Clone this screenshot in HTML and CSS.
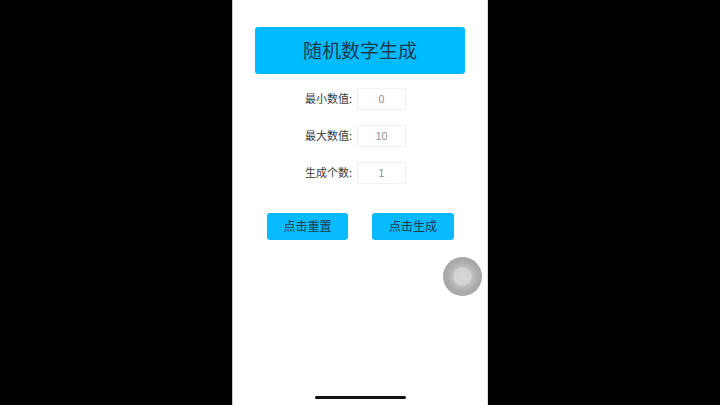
FILE: index.html
```html
<!DOCTYPE html>
<html lang="zh">
<head>
<meta charset="utf-8">
<title>随机数字生成</title>
<link rel="stylesheet" href="styles.css">
</head>
<body>
<main class="phone">
  <h1 class="title">随机数字生成</h1>
  <div class="fields">
    <div class="field"><span class="label">最小数值:</span><div class="input">0</div></div>
    <div class="field"><span class="label">最大数值:</span><div class="input">10</div></div>
    <div class="field"><span class="label">生成个数:</span><div class="input">1</div></div>
  </div>
  <div class="actions">
    <button class="btn">点击重置</button>
    <button class="btn">点击生成</button>
  </div>
  <div class="touch"></div>
  <div class="home-bar"></div>
</main>
</body>
</html>
```
FILE: styles.css
```css
* { box-sizing: border-box; }
html, body { margin: 0; height: 100%; }
body {
  width: 720px;
  height: 405px;
  background: #000;
  overflow: hidden;
  padding-left: 233px;
  font-family: "Noto Sans CJK SC", "Noto Sans", sans-serif;
}
.phone {
  position: relative;
  width: 255px;
  height: 405px;
  background: #fff;
  padding: 27px 23px 0 22px;
  box-shadow: -1px 0 0 #c8c8c8, inset -1px 0 0 #dcdcdc;
}
.title {
  margin: 0;
  height: 47px;
  background: #00bbff;
  border-radius: 3px;
  color: #1f3a4d;
  font-size: 19px;
  font-weight: 400;
  line-height: 45px;
  text-align: center;
}
.fields {
  margin-top: 14px;
  display: flex;
  flex-direction: column;
  gap: 15px;
}
.field {
  display: flex;
  align-items: center;
  height: 22px;
  padding-left: 50px;
}
.label {
  width: 52px;
  margin-top: -2px;
  font-size: 11px;
  color: #3a3a3a;
  white-space: nowrap;
}
.input {
  width: 49px;
  height: 22px;
  border: 1px solid #f2f2f2;
  font-size: 10.5px;
  line-height: 20px;
  text-align: center;
  color: #909090;
  font-family: "Liberation Sans", sans-serif;
}
.actions {
  margin-top: 29px;
  padding: 0 11px 0 12px;
  display: flex;
  justify-content: space-between;
}
.btn {
  width: 81px;
  height: 27px;
  padding: 0 0 2px;
  border: 0;
  border-radius: 3px;
  background: #0abaff;
  color: #1f3a4d;
  font: inherit;
  font-size: 12px;
}
.btn + .btn { width: 82px; }
.touch {
  position: absolute;
  left: 210px;
  top: 257px;
  width: 39px;
  height: 39px;
  border-radius: 50%;
  background: radial-gradient(circle closest-side, #d6d6d6 0, #d3d3d3 42%, #bdbdbd 52%, #adadad 75%, #a6a6a6 100%);
}
.home-bar {
  position: absolute;
  left: 82px;
  top: 396px;
  width: 91px;
  height: 3px;
  border-radius: 2px;
  background: #111;
}
```
